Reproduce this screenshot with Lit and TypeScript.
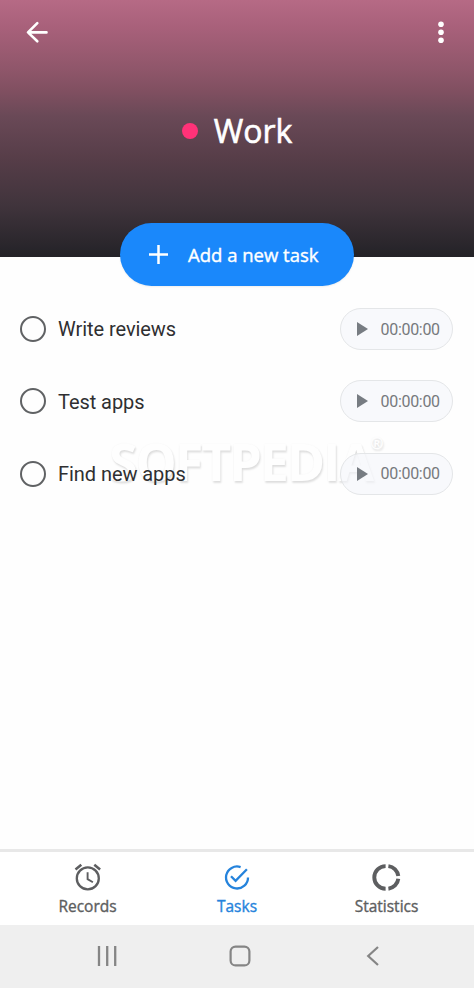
import { LitElement, html, css, svg } from "lit";
import { customElement, property } from "lit/decorators.js";
import { classMap } from "lit/directives/class-map.js";

@customElement("task-row")
class TaskRow extends LitElement {
  @property() name = "";
  @property() time = "00:00:00";
  static styles = css`
    :host { display: flex; align-items: center; height: 72.3px; padding: 0 21px 0 20px; }
    .check { box-sizing: border-box; width: 26px; height: 26px; border: 2.5px solid #606264; border-radius: 50%; }
    .name { flex: 1; margin-left: 12px; padding-top: 0.4px; font: 20px/26px Roboto, sans-serif; letter-spacing: -0.06px; color: #2f2f31; white-space: nowrap; }
    .timer { box-sizing: border-box; width: 113px; height: 42px; border: 1px solid #e4e6e8; border-radius: 21px; background: #f4f6faa8; display: flex; align-items: center; padding-left: 16px; gap: 12.5px; color: #76797d; font: 16px/20px Roboto, sans-serif; letter-spacing: -0.3px; }
    .timer span { padding-top: 1px; }
    svg { display: block; flex: none; }
  `;
  render() {
    return html`<div class="check"></div>
      <div class="name">${this.name}</div>
      <div class="timer">
        <svg width="11" height="14" viewBox="0 0 11 14"><path d="M0 0L11 7L0 14Z" fill="#777c82" /></svg>
        <span>${this.time}</span>
      </div>`;
  }
}

const icons = {
  alarm: svg`<g fill="none" stroke="currentColor" stroke-width="2.3">
    <circle cx="13.8" cy="15.4" r="11" /><path d="M13.6 9.3V16.1L18.9 19.2" stroke-width="1.9" />
    <path d="M1.5 6.4L7.3 1.8M26.1 6.4L20.3 1.8" stroke-width="2.6" /></g>`,
  check: svg`<g fill="none" stroke="currentColor" stroke-width="2.3">
    <path d="M17.6 4.1A11 11 0 1 0 25 14.4" /><path d="M8 13.2L12.6 17.9L23.9 6.2" /></g>`,
  donut: svg`<g fill="none" stroke="currentColor" stroke-width="3.9">
    <path d="M12.6 3.1A11.3 11.3 0 0 0 12.6 25.7" />
    <path d="M15.4 3.1A11.3 11.3 0 0 1 25.3 13" />
    <path d="M25.3 15.8A11.3 11.3 0 0 1 15.4 25.7" /></g>`,
};

@customElement("app-root")
class AppRoot extends LitElement {
  private tasks = ["Write reviews", "Test apps", "Find new apps"];
  private tabs = [
    { label: "Records", icon: icons.alarm, active: false },
    { label: "Tasks", icon: icons.check, active: true },
    { label: "Statistics", icon: icons.donut, active: false },
  ];
  static styles = css`
    :host { display: flex; flex-direction: column; position: relative; width: 474px; height: 988px; overflow: hidden; background: #fefefe; font-family: "Open Sans", sans-serif; }
    svg { display: block; flex: none; overflow: visible; }
    .header { height: 257px; flex: none; background: linear-gradient(#b66a85 0%, #a9617b 10%, #8f566a 27%, #7f4f60 36%, #6a4957 45%, #563d48 62%, #40343c 80%, #232227 100%); }
    .bar { display: flex; justify-content: space-between; padding: 21px 29px 0 26px; }
    .title { display: flex; align-items: center; justify-content: center; gap: 16px; height: 44px; margin-top: 64px; color: #fff; font-size: 32px; line-height: 44px; -webkit-text-stroke: 0.6px currentColor; }
    .dot { width: 16px; height: 16px; border-radius: 50%; background: #ff3278; }
    .add { box-sizing: border-box; width: 234px; height: 63px; margin: -34px auto 0; border-radius: 32px; background: #1a88fb; color: #fff; display: flex; align-items: center; padding-left: 29px; gap: 20px; font-size: 18.5px; -webkit-text-stroke: 0.4px currentColor; white-space: nowrap; z-index: 2; flex: none; box-shadow: 0 1px 2px #0001; }
    .list { flex: 1; padding-top: 7px; position: relative; z-index: 1; }
    .mark { position: absolute; left: 109px; top: 423px; font-size: 52px; font-weight: 700; letter-spacing: -2.1px; line-height: 76px; color: #fefefe; text-shadow: 1px 2px 2px #0000001f, 0 0 2px #0000000a; white-space: nowrap; pointer-events: none; }
    .mark sup { font-size: 16px; line-height: 0; vertical-align: 32px; margin-left: -2px; }
    .tabs { box-sizing: border-box; height: 76px; flex: none; display: flex; justify-content: space-between; padding: 0 37px; border-top: 3px solid #e8e8e8; background: #fff; }
    .tab { width: 101px; display: flex; flex-direction: column; align-items: center; padding-top: 11px; gap: 4px; color: #5d5e60; font-size: 15.5px; line-height: 22px; -webkit-text-stroke: 0.35px currentColor; }
    .active { color: #2583dc; }
    .nav { height: 63px; flex: none; background: #efefef; display: flex; justify-content: space-between; align-items: center; box-sizing: border-box; padding: 0 95px 1px 97px; }
    .home { position: relative; left: -2.5px; }
  `;
  render() {
    return html`
      <div class="header">
        <div class="bar">
          <svg width="22" height="23" viewBox="0 0 22 23" fill="none" stroke="#fff" stroke-width="2.6" stroke-linecap="round" stroke-linejoin="round"><path d="M20.5 11.4H2.2M11.3 2.1L2 11.4L11.3 20.3" /></svg>
          <svg width="8" height="24" viewBox="0 0 8 24" fill="#fff"><circle cx="4" cy="3.3" r="2.8" /><circle cx="4" cy="11.3" r="2.8" /><circle cx="4" cy="19.2" r="2.8" /></svg>
        </div>
        <div class="title"><span class="dot"></span><span>Work</span></div>
      </div>
      <div class="add">
        <svg width="19" height="19" viewBox="0 0 19 19" stroke="#fff" stroke-width="2.5"><path d="M9.5 0V19M0 9.5H19" /></svg>
        <span>Add a new task</span>
      </div>
      <div class="list">${this.tasks.map((t) => html`<task-row .name=${t}></task-row>`)}</div>
      <div class="mark">SOFTPEDIA<sup>®</sup></div>
      <div class="tabs">
        ${this.tabs.map((t) => html`<div class=${classMap({ tab: true, active: t.active })}>
          <svg width="28" height="28" viewBox="0 0 28 28">${t.icon}</svg><span>${t.label}</span>
        </div>`)}
      </div>
      <div class="nav">
        <svg width="20" height="20" viewBox="0 0 20 20" stroke="#858585" stroke-width="2.3"><path d="M2 0V20M10.2 0V20M18.2 0V20" /></svg>
        <svg class="home" width="22" height="22" viewBox="0 0 22 22" fill="none" stroke="#858585" stroke-width="2.2"><rect x="1.6" y="1.6" width="18.8" height="18.8" rx="5" /></svg>
        <svg width="12" height="20" viewBox="0 0 12 20" fill="none" stroke="#858585" stroke-width="2.2"><path d="M11 1L1.2 10L11 19" /></svg>
      </div>`;
  }
}
